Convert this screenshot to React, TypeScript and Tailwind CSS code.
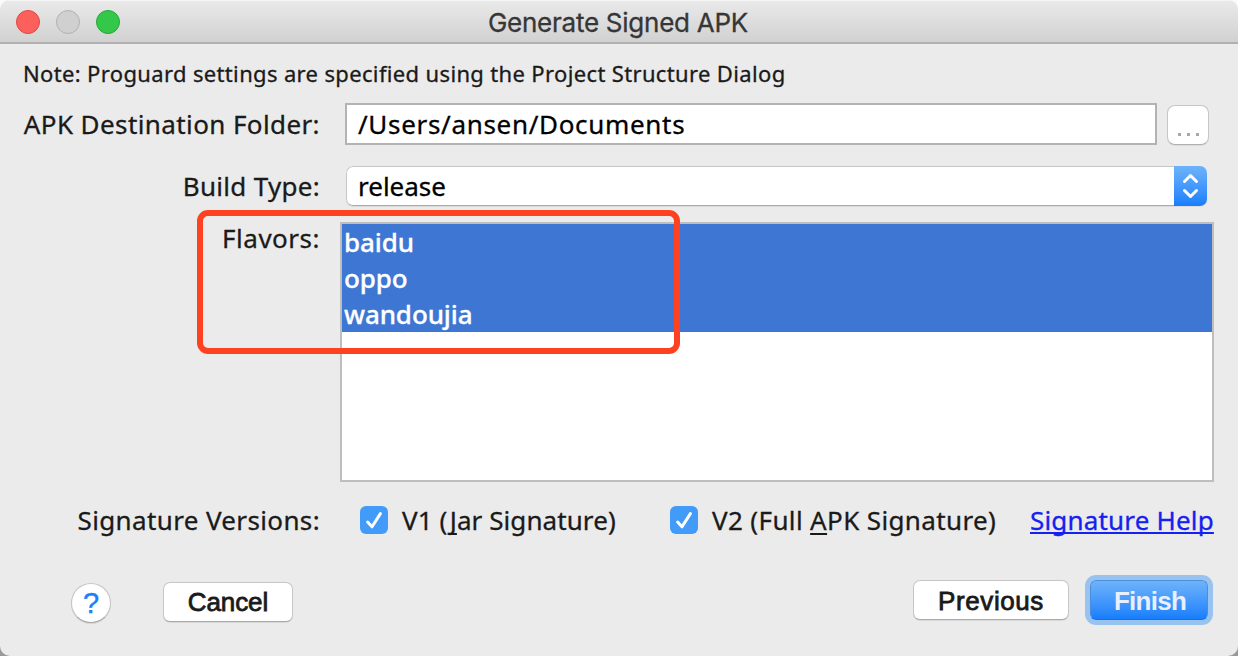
import type { ReactNode } from "react";

const flavors = [
  { name: "baidu", spacing: "tracking-[-0.1px]" },
  { name: "oppo", spacing: "tracking-[-0.1px]" },
  { name: "wandoujia", spacing: "tracking-[-0.1px]" },
];

function Checkbox() {
  return (
    <span className="flex h-7 w-7 shrink-0 items-center justify-center rounded-[6px] bg-[#429bf9]">
      <svg width="28" height="28" viewBox="0 0 28 28" fill="none">
        <path d="M7.6 16 L12 20.8 L20.4 7.6" stroke="white" strokeWidth="3" strokeLinecap="round" strokeLinejoin="round" />
      </svg>
    </span>
  );
}

function Label({ children, className }: { children: ReactNode; className: string }) {
  return <div className={`flex w-[320px] shrink-0 justify-end whitespace-nowrap ${className}`}>{children}</div>;
}

export default function App() {
  return (
    <div className="h-[656px] w-[1238px] overflow-hidden bg-[linear-gradient(#fafafa_50%,#999999_50%)]">
      <div className="relative flex h-full flex-col overflow-hidden rounded-[10px] bg-[#ebebeb] font-['Noto_Sans','Liberation_Sans',sans-serif] text-[26px] leading-[36px] text-[#1a1a1a] [-webkit-text-stroke:0.3px_currentColor]">
        <header className="grid h-11 shrink-0 grid-cols-[1fr_auto_1fr] items-center border-b-2 border-[#b1b1b1] bg-linear-to-b from-[#eaeaea] to-[#d1d1d1] shadow-[inset_0_1px_0_#f6f6f6]">
          <div className="flex gap-4 pl-4 pt-0.5">
            <span className="h-6 w-6 rounded-full border border-[#df4744] bg-[#fc605c]" />
            <span className="h-6 w-6 rounded-full border border-[#b1b1b1] bg-[#d0d0d0]" />
            <span className="h-6 w-6 rounded-full border border-[#22a935] bg-[#34c84a]" />
          </div>
          <h1 className="whitespace-nowrap pr-0.5 pt-[3px] font-['Inter','Liberation_Sans',sans-serif] text-[26px] font-normal tracking-[-0.25px] text-[#363636]">
            Generate Signed APK
          </h1>
          <div />
        </header>

        <p className="mt-[11px] h-[36px] whitespace-nowrap pl-[23px] text-[22px] tracking-[0.35px]">
          Note: Proguard settings are specified using the Project Structure Dialog
        </p>

        <div className="mt-[12px] flex h-[42px] items-center">
          <Label className="tracking-[0.4px]">APK Destination Folder:</Label>
          <div className="ml-[25px] flex h-[42px] w-[812px] items-center border-2 border-[#b3b3b3] bg-white pl-[11px] text-black tracking-[0.68px]">
            /Users/ansen/Documents
          </div>
          <button className="ml-[10px] mt-0.5 flex h-10 w-[42px] items-end justify-center gap-[6px] rounded-[8px] border border-[#c6c6c6] border-b-[#b0b0b0] bg-white pb-[8px] shadow-[0_1px_0_#dcdcdc]">
            <i className="h-[3px] w-[3px] bg-[#a8a8a8]" />
            <i className="h-[3px] w-[3px] bg-[#a8a8a8]" />
            <i className="h-[3px] w-[3px] bg-[#a8a8a8]" />
          </button>
        </div>

        <div className="mt-[21px] flex h-10 items-center">
          <Label className="tracking-[0.3px]">Build Type:</Label>
          <div className="ml-[26px] flex h-10 w-[861px] items-stretch overflow-hidden rounded-[7px] shadow-[0_1px_0_#dcdcdc]">
            <div className="flex flex-1 items-center rounded-l-[7px] border border-r-0 border-[#c6c6c6] border-b-[#a9a9a9] bg-white pl-[11px] text-black">
              release
            </div>
            <div className="flex w-[33px] items-center justify-center bg-linear-to-b from-[#6db3fa] to-[#157efb]">
              <svg width="33" height="40" viewBox="0 0 33 40" fill="none" stroke="white" strokeWidth="3" strokeLinecap="round" strokeLinejoin="round">
                <path d="M10.5 15.5 L16.5 9.5 L22.5 15.5" />
                <path d="M10.5 24.5 L16.5 30.5 L22.5 24.5" />
              </svg>
            </div>
          </div>
        </div>

        <div className="mt-4 flex h-[260px]">
          <Label className="-mt-0.5 tracking-[0.5px]">Flavors:</Label>
          <ul className="ml-[20px] h-[260px] w-[874px] border-2 border-[#bebebe] bg-white">
            {flavors.map((f) => (
              <li key={f.name} className={`h-9 bg-[#3d77d3] pl-0.5 font-medium text-white ${f.spacing}`}>
                {f.name}
              </li>
            ))}
          </ul>
        </div>

        <div className="mt-[18px] flex h-10 items-center whitespace-nowrap">
          <Label className="tracking-[0.36px]">Signature Versions:</Label>
          <label className="ml-[40px] flex w-[310px] items-center gap-[14px] tracking-[0.08px]">
            <Checkbox />
            <span>
              V1 (<span className="underline decoration-2 underline-offset-[3px] [text-decoration-skip-ink:none]">J</span>ar Signature)
            </span>
          </label>
          <label className="flex w-[360px] items-center gap-[14px] tracking-[0.37px]">
            <Checkbox />
            <span>
              V2 (Full <span className="underline decoration-2 underline-offset-[3px] [text-decoration-skip-ink:none]">A</span>PK Signature)
            </span>
          </label>
          <a className="tracking-[0.18px] text-[#1422f0] underline decoration-2 underline-offset-[2px] [text-decoration-skip-ink:none]">Signature Help</a>
        </div>

        <footer className="mt-[40px] flex h-10 items-start font-['Liberation_Sans',sans-serif]">
          <button className="ml-[71px] mt-[3px] flex h-10 w-10 items-center justify-center rounded-full border border-[#c4c4c4] border-b-[#aaaaaa] bg-white text-[29px] text-[#1a80fa] shadow-[0_1px_0_#d4d4d4] [-webkit-text-stroke:0.4px_#1a80fa]">
            ?
          </button>
          <button className="ml-[52px] mt-[2px] flex h-10 w-[130px] items-center justify-center rounded-[7px] border border-[#c6c6c6] border-b-[#aaaaaa] bg-white text-[26px] tracking-[-0.1px] shadow-[0_1px_0_#d8d8d8] [-webkit-text-stroke:0.8px_#1a1a1a]">
            Cancel
          </button>
          <button className="ml-[620px] flex h-10 w-[156px] items-center justify-center rounded-[7px] border border-[#c6c6c6] border-b-[#aaaaaa] bg-white pt-px text-[26px] tracking-[0.6px] shadow-[0_1px_0_#d8d8d8] [-webkit-text-stroke:0.8px_#1a1a1a]">
            Previous
          </button>
          <button className="ml-[21px] flex h-10 w-[118px] items-center justify-center rounded-[6px] border border-[#4a8fdc] border-b-[#1a6fe0] bg-linear-to-b from-[#6db3fa] to-[#157efb] pl-0.5 pt-px text-[26px] font-bold tracking-[-0.75px] text-[#e8effd] shadow-[0_0_0_5px_#98c2f0] [-webkit-text-stroke:0]">
            Finish
          </button>
        </footer>

        <div className="pointer-events-none absolute left-[197px] top-[210px] h-[144px] w-[483px] rounded-[11px] border-[6px] border-[#fe4120]" />
      </div>
    </div>
  );
}
